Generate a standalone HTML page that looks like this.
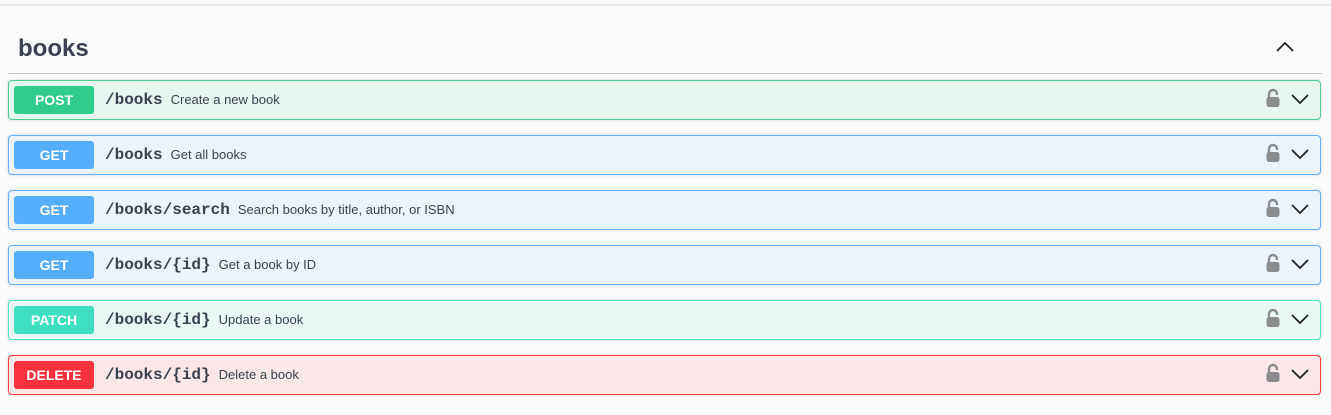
<!DOCTYPE html>
<html><head><style>
body{margin:0;background:#fafafa;width:1331px;height:415px;overflow:hidden;font-family:"Liberation Sans",sans-serif;color:#3b4151}
.top{position:absolute;left:0;top:4px;width:1331px;height:2px;background:#e8e8e8}
h2{position:absolute;left:18px;top:35px;margin:0;font-size:24px;font-weight:bold;color:#3b4151}
.hr{position:absolute;left:8px;top:73px;width:1314px;height:1px;background:#c8c8cc}
.up{position:absolute;left:1276px;top:40px}
.row{position:absolute;left:8px;width:1311px;height:38px;border:1px solid;border-radius:4px;box-shadow:0 0 3px rgba(0,0,0,.15)}
.b{position:absolute;left:5px;top:5px;width:80px;height:28px;border-radius:3px;color:#fff;font-weight:bold;font-size:14px;text-align:center;line-height:29px}
.p{position:absolute;left:96px;top:10px;font-family:"Liberation Mono","DejaVu Sans Mono",monospace;font-weight:bold;font-size:16px;color:#3b4151}
.d{font-family:"Liberation Sans",sans-serif;font-weight:normal;font-size:13px;margin-left:8px}
.lock{position:absolute;left:1256px;top:7px}
.chev{position:absolute;left:1282px;top:11px}
.post{border-color:#49cc90;background:#e8f6f0}.post .b{background:#2fcc8e}
.get{border-color:#61affe;background:#ebf3fb}.get .b{background:#55aefc}
.patch{border-color:#50e3c2;background:#e9f8f5}.patch .b{background:#3fe0c0}
.del{border-color:#f93e3e;background:#fae7e7}.del .b{background:#f9303e}
</style></head><body>
<div class="top"></div>
<h2>books</h2>
<svg class="up" width="18" height="14" viewBox="0 0 18 14"><path d="M1 11 L9 3 L17 11" fill="none" stroke="#222" stroke-width="1.8"/></svg>
<div class="hr"></div>

<div class="row post" style="top:80px"><div class="b">POST</div><div class="p">/books<span class="d">Create a new book</span></div>
<svg class="lock" width="16" height="20" viewBox="0 0 16 20"><path d="M4 10 V6 a4 4 0 0 1 8 0 V7" fill="none" stroke="#8a8c8e" stroke-width="2.4"/><rect x="1.5" y="9" width="13" height="10" rx="2.5" fill="#8a8c8e"/></svg>
<svg class="chev" width="18" height="14" viewBox="0 0 18 14"><path d="M1 3 L9 11 L17 3" fill="none" stroke="#222" stroke-width="1.8"/></svg></div>

<div class="row get" style="top:135px"><div class="b">GET</div><div class="p">/books<span class="d">Get all books</span></div>
<svg class="lock" width="16" height="20" viewBox="0 0 16 20"><path d="M4 10 V6 a4 4 0 0 1 8 0 V7" fill="none" stroke="#8a8c8e" stroke-width="2.4"/><rect x="1.5" y="9" width="13" height="10" rx="2.5" fill="#8a8c8e"/></svg>
<svg class="chev" width="18" height="14" viewBox="0 0 18 14"><path d="M1 3 L9 11 L17 3" fill="none" stroke="#222" stroke-width="1.8"/></svg></div>

<div class="row get" style="top:190px"><div class="b">GET</div><div class="p">/books/search<span class="d">Search books by title, author, or ISBN</span></div>
<svg class="lock" width="16" height="20" viewBox="0 0 16 20"><path d="M4 10 V6 a4 4 0 0 1 8 0 V7" fill="none" stroke="#8a8c8e" stroke-width="2.4"/><rect x="1.5" y="9" width="13" height="10" rx="2.5" fill="#8a8c8e"/></svg>
<svg class="chev" width="18" height="14" viewBox="0 0 18 14"><path d="M1 3 L9 11 L17 3" fill="none" stroke="#222" stroke-width="1.8"/></svg></div>

<div class="row get" style="top:245px"><div class="b">GET</div><div class="p">/books/{id}<span class="d">Get a book by ID</span></div>
<svg class="lock" width="16" height="20" viewBox="0 0 16 20"><path d="M4 10 V6 a4 4 0 0 1 8 0 V7" fill="none" stroke="#8a8c8e" stroke-width="2.4"/><rect x="1.5" y="9" width="13" height="10" rx="2.5" fill="#8a8c8e"/></svg>
<svg class="chev" width="18" height="14" viewBox="0 0 18 14"><path d="M1 3 L9 11 L17 3" fill="none" stroke="#222" stroke-width="1.8"/></svg></div>

<div class="row patch" style="top:300px"><div class="b">PATCH</div><div class="p">/books/{id}<span class="d">Update a book</span></div>
<svg class="lock" width="16" height="20" viewBox="0 0 16 20"><path d="M4 10 V6 a4 4 0 0 1 8 0 V7" fill="none" stroke="#8a8c8e" stroke-width="2.4"/><rect x="1.5" y="9" width="13" height="10" rx="2.5" fill="#8a8c8e"/></svg>
<svg class="chev" width="18" height="14" viewBox="0 0 18 14"><path d="M1 3 L9 11 L17 3" fill="none" stroke="#222" stroke-width="1.8"/></svg></div>

<div class="row del" style="top:355px"><div class="b">DELETE</div><div class="p">/books/{id}<span class="d">Delete a book</span></div>
<svg class="lock" width="16" height="20" viewBox="0 0 16 20"><path d="M4 10 V6 a4 4 0 0 1 8 0 V7" fill="none" stroke="#8a8c8e" stroke-width="2.4"/><rect x="1.5" y="9" width="13" height="10" rx="2.5" fill="#8a8c8e"/></svg>
<svg class="chev" width="18" height="14" viewBox="0 0 18 14"><path d="M1 3 L9 11 L17 3" fill="none" stroke="#222" stroke-width="1.8"/></svg></div>
</body></html>
